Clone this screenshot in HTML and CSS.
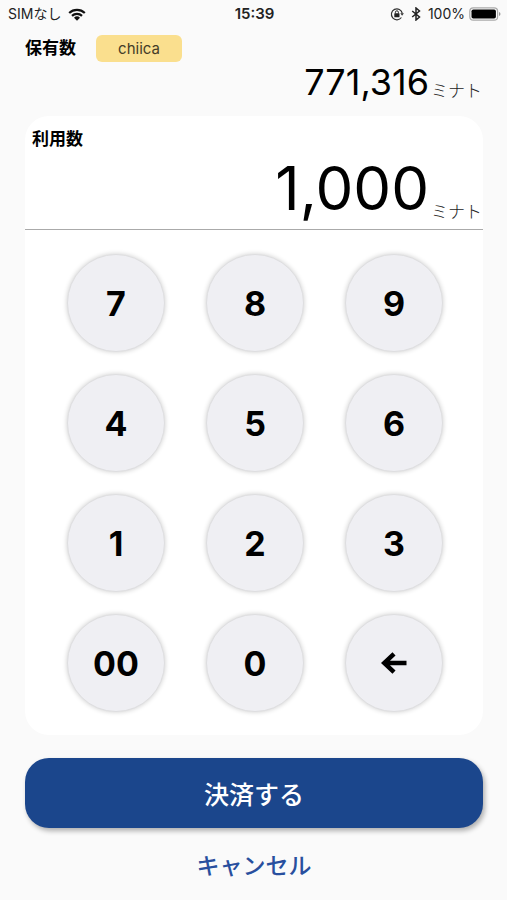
FILE: index.html
```html
<!DOCTYPE html>
<html lang="ja">
<head>
    <meta charset="UTF-8">
    <meta name="viewport" content="width=device-width, initial-scale=1.0">
    <title>chiica</title>
    <link rel="stylesheet" href="styles.css">
</head>
<body>
    <header class="status-bar">
        <div class="status-left">
            <span>SIMなし</span>
            <svg class="wifi" viewBox="0 0 18 13" width="18" height="13">
                <path d="M1.2 5a11.2 11.2 0 0 1 15.6 0M4 7.9a7.2 7.2 0 0 1 10 0" fill="none" stroke="#111" stroke-width="2.2"/>
                <path d="M9 12.8 6 9.8a4.3 4.3 0 0 1 6 0z" fill="#111"/>
            </svg>
        </div>
        <span class="clock">15:39</span>
        <div class="status-right">
            <svg class="rotation-lock" viewBox="0 0 14 14" width="14" height="14">
                <path d="M11.4 10.5A5.5 5.5 0 1 1 12.3 6.3" fill="none" stroke="#333" stroke-width="1.2"/>
                <path d="M10.3 6.2h3.6l-1.8 2.6z" fill="#333"/>
                <rect x="4.3" y="6.3" width="5.2" height="3.9" rx=".5" fill="#222"/>
                <path d="M5.4 6.5V5.3a1.5 1.5 0 0 1 3 0v1.2" fill="none" stroke="#222"/>
            </svg>
            <svg class="bluetooth" viewBox="0 0 10 14" width="10" height="14">
                <path d="M1.2 4 8.5 10 5 13V1l3.5 3-7.3 6" fill="none" stroke="#222" stroke-width="1.5"/>
            </svg>
            <span>100%</span>
            <svg class="battery" viewBox="0 0 32 14" width="32" height="14">
                <rect x=".8" y=".8" width="27.8" height="12.4" rx="3.5" fill="#fafafa" stroke="#aaa" stroke-width="1.2"/>
                <rect x="2.5" y="2.5" width="24.4" height="9" rx="1.8" fill="#000"/>
                <path d="M30 5v4q1.5-.6 1.5-2T30 5z" fill="#999"/>
            </svg>
        </div>
    </header>

    <main class="payment">
        <section class="balance">
            <div class="balance-header">
                <h2 class="label">保有数</h2>
                <span class="badge">chiica</span>
            </div>
            <p class="amount balance-amount">771,316<span class="unit">ミナト</span></p>
        </section>

        <section class="card">
            <div class="usage">
                <h2 class="label">利用数</h2>
                <p class="amount usage-amount"><output>1,000</output><span class="unit">ミナト</span></p>
            </div>
            <div class="keypad">
                <button type="button" class="key">7</button>
                <button type="button" class="key">8</button>
                <button type="button" class="key">9</button>
                <button type="button" class="key">4</button>
                <button type="button" class="key">5</button>
                <button type="button" class="key">6</button>
                <button type="button" class="key">1</button>
                <button type="button" class="key">2</button>
                <button type="button" class="key">3</button>
                <button type="button" class="key">00</button>
                <button type="button" class="key">0</button>
                <button type="button" class="key" aria-label="削除">
                    <svg viewBox="0 0 26 22" width="26" height="22">
                        <path d="M25.5 11H4M13 1.800 3.200 11l9.800 9.200" fill="none" stroke="#000" stroke-width="4.500"/>
                    </svg>
                </button>
            </div>
        </section>

        <div class="actions">
            <button type="button" class="btn btn-primary">決済する</button>
            <button type="button" class="btn btn-cancel">キャンセル</button>
        </div>
    </main>
</body>
</html>
```

FILE: styles.css
```css
* {
    box-sizing: border-box;
    margin: 0;
    padding: 0;
}
body {
    font-family: Inter, "Noto Sans CJK JP", sans-serif;
    color: #000;
    background-color: #fafafa;
}

/* Status bar */
.status-bar {
    display: grid;
    grid-template-columns: 1fr auto 1fr;
    align-items: center;
    height: 28px;
    padding: 0 6px 0 8px;
    font-size: 14px;
    line-height: 20px;
    color: #222;
}
.status-left, .status-right {
    display: flex;
    align-items: center;
    gap: 7px;
}
.status-right {
    justify-content: flex-end;
    gap: 4px;
}
.bluetooth {
    margin: 0 3px;
}
.clock {
    font-size: 15px;
    font-weight: 600;
}

.payment {
    padding: 7px 24px 0 25px;
}
.label {
    font-size: 17px;
    line-height: 27px;
    font-weight: 700;
}

/* Balance */
.balance {
    padding-bottom: 14px;
}
.balance-header {
    display: flex;
    align-items: center;
    gap: 20px;
}
.badge {
    width: 86px;
    border-radius: 6px;
    background-color: #fadf8e;
    color: #443c28;
    font-size: 15px;
    line-height: 27px;
    text-align: center;
}
.amount {
    display: flex;
    justify-content: flex-end;
    align-items: flex-end;
    gap: 2px;
    padding-right: 1px;
}
.balance-amount {
    font-size: 36px;
    line-height: 40px;
}
.unit {
    font-size: 17px;
    line-height: 22px;
    font-weight: 300;
    color: #222;
}

/* Amount entry */
.card {
    border-radius: 24px;
    background-color: #fff;
}
.usage {
    padding-top: 10px;
    border-bottom: 1px solid #aaa;
}
.usage .label {
    padding-left: 7px;
}
.usage-amount {
    padding-bottom: 6px;
    font-size: 60px;
    line-height: 70px;
}
.keypad {
    display: grid;
    grid-template-columns: repeat(3, 98px);
    justify-content: space-between;
    row-gap: 22px;
    padding: 24px 40px 23px 42px;
}
.key {
    display: flex;
    justify-content: center;
    align-items: center;
    height: 98px;
    border: 1px solid #dedee0;
    border-radius: 50%;
    background-color: #efeff3;
    box-shadow: 0 0 5px rgba(0, 0, 0, 0.2);
    color: #000;
    font-family: inherit;
    font-size: 34px;
    font-weight: 700;
    cursor: pointer;
}

/* Buttons */
.actions {
    display: flex;
    flex-direction: column;
    align-items: center;
    gap: 20px;
    padding-top: 23px;
}
.btn {
    border: none;
    font-family: inherit;
    cursor: pointer;
}
.btn-primary {
    width: 100%;
    height: 70px;
    border-radius: 24px;
    background-color: #1b468c;
    box-shadow: 2px 3px 5px rgba(0, 0, 0, 0.3);
    color: #fff;
    font-size: 25px;
    font-weight: 500;
}
.btn-cancel {
    background: none;
    color: #284f9e;
    font-size: 23px;
    line-height: 36px;
    font-weight: 500;
}
```
